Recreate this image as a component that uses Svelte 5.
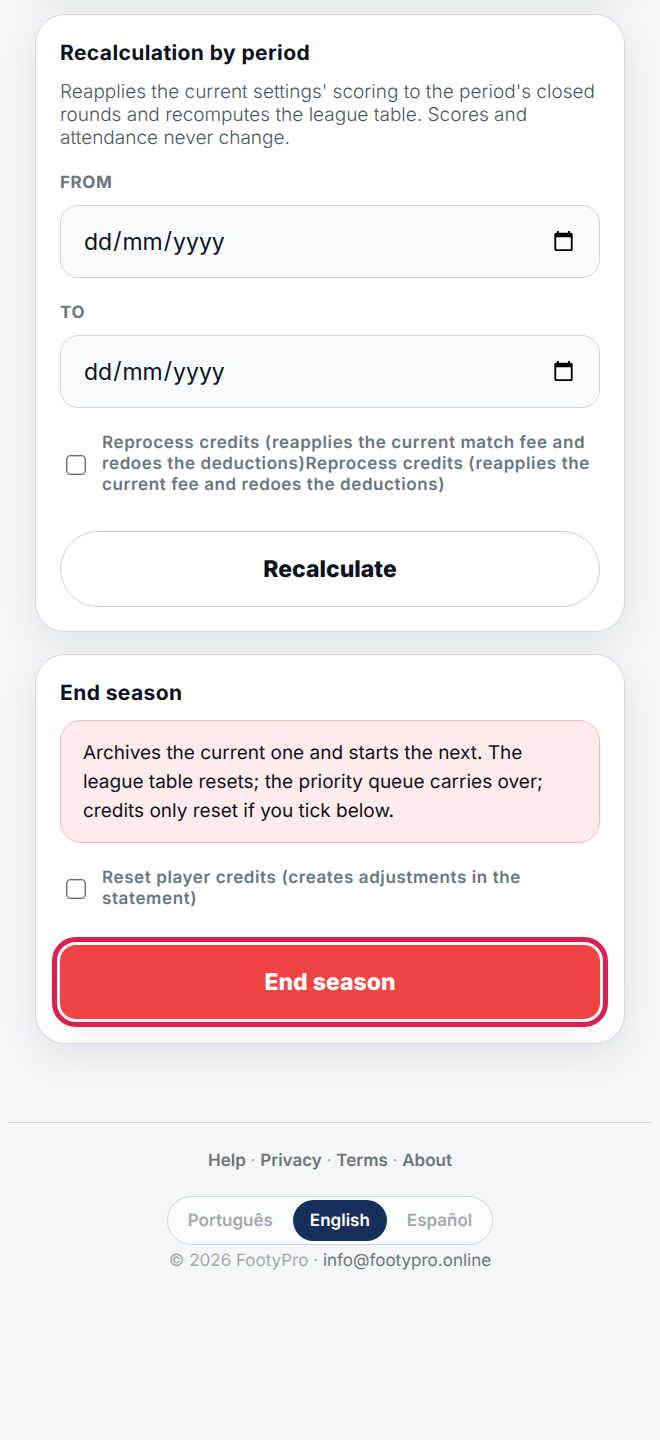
<script lang="ts">
	let from = $state('');
	let to = $state('');
	let reprocess = $state(false);
	let resetCredits = $state(false);
	let lang = $state('en');

	const languages = [
		{ code: 'pt', label: 'Português' },
		{ code: 'en', label: 'English' },
		{ code: 'es', label: 'Español' },
	];

	const links = ['Help', 'Privacy', 'Terms', 'About'];
</script>

<div class="page">
	<main class="cards">
		<section class="card">
			<h2>Recalculation by period</h2>
			<p class="hint">
				Reapplies the current settings' scoring to the period's closed rounds and recomputes the
				league table. Scores and attendance never change.
			</p>

			<label class="field-label" for="from">From</label>
			<input class="date" id="from" type="date" bind:value={from} />

			<label class="field-label" for="to">To</label>
			<input class="date" id="to" type="date" bind:value={to} />

			<label class="check">
				<input type="checkbox" bind:checked={reprocess} />
				<span>Reprocess credits (reapplies the current match fee and redoes the deductions)Reprocess credits (reapplies the current fee and redoes the deductions)</span>
			</label>

			<button class="btn outline" type="button">Recalculate</button>
		</section>

		<section class="card">
			<h2>End season</h2>
			<p class="notice">
				Archives the current one and starts the next. The league table resets; the priority queue
				carries over; credits only reset if you tick below.
			</p>

			<label class="check">
				<input type="checkbox" bind:checked={resetCredits} />
				<span>Reset player credits (creates adjustments in the statement)</span>
			</label>

			<button class="btn danger" type="button">End season</button>
		</section>
	</main>

	<footer>
		<nav>
			{#each links as link, i (link)}
				{#if i > 0}{' · '}{/if}<a href="#{link.toLowerCase()}">{link}</a>
			{/each}
		</nav>
		<div class="langs">
			{#each languages as l (l.code)}
				<button type="button" class:active={lang === l.code} onclick={() => (lang = l.code)}>{l.label}</button>
			{/each}
		</div>
		<div class="copy">© 2026 FootyPro · <a href="mailto:info@footypro.online">info@footypro.online</a></div>
	</footer>
</div>

<style>
:global(body) { background: #f4f6fa; }

.page {
	box-sizing: border-box; min-height: 100vh; padding: 0 8px 160px;
	overflow: hidden;
	font-family: Inter, "Liberation Sans", sans-serif;
	text-rendering: geometricPrecision;
	color: #0b1220;
}

.cards {
	display: flex; flex-direction: column; gap: 22px;
	padding: 0 27px;
}
/* tail of the card scrolled off above */
.cards::before {
	content: ''; height: 60px; margin-top: -68px;
	border-radius: 30px;
}
.card, .cards::before {
	box-shadow: 0 12px 36px rgba(15, 23, 32, .08);
}
.card {
	display: flex; flex-direction: column;
	padding: 25px 24px 24px;
	background: #fff; border: 1px solid #d5d8dc; border-radius: 30px;
}

h2 {
	margin: 0 0 12px;
	font-size: 21px; line-height: 28px; font-weight: 700; letter-spacing: .4px;
}
.hint {
	margin: 0 0 24px;
	font-size: 19px; line-height: 23px; font-weight: 300; color: #4c565e;
}

.field-label {
	margin-bottom: 11px;
	font-size: 17px; line-height: 21px; font-weight: 700;
	letter-spacing: .6px; text-transform: uppercase; color: #6b757d;
}
.date {
	box-sizing: border-box; width: 100%; height: 73px;
	margin: 0 0 25px; padding: 0 22px;
	background: #f8fafc; border: 1px solid #d0d5d9; border-radius: 18px;
	font-family: inherit; font-size: 23px; color: #0b1220;
}
/* day / month / year whatever the browser locale is */
.date::-webkit-datetime-edit-fields-wrapper {
	display: inline-grid; grid-auto-columns: max-content; grid-auto-flow: column;
}
.date::-webkit-datetime-edit-day-field { grid-area: 1 / 1; }
.date::-webkit-datetime-edit-month-field { grid-area: 1 / 3; }
.date::-webkit-datetime-edit-year-field { grid-area: 1 / 5; }
.date::-webkit-datetime-edit-text { grid-row: 1; }

.check {
	display: flex; align-items: center; gap: 16px;
	margin-bottom: 35px; padding-left: 6px;
	font-size: 17px; line-height: 21px; font-weight: 600;
	letter-spacing: .6px; color: #6b757d;
}
.check input {
	appearance: none; box-sizing: border-box; flex-shrink: 0;
	width: 20px; height: 20px; margin: 0;
	background: #fff; border: 1px solid #6a6a6a; border-radius: 4px;
	box-shadow: inset 0 0 0 1px #c4c4c4;
}
.check input:checked { background: #172f5b; border-color: #172f5b; }

.btn {
	height: 76px; padding: 0 24px;
	font-family: inherit; font-size: 23px; font-weight: 800;
	text-rendering: inherit;
	cursor: pointer;
}
.outline {
	background: #fff; color: #0b1220;
	border: 1px solid #c9cdd1; border-radius: 38px;
}
.danger {
	height: 74px;
	background: #f04444; color: #fff;
	border: none; border-radius: 16px;
	outline: 5px solid #dc1f4e; outline-offset: 3px;
	box-shadow: 0 12px 36px rgba(15, 23, 32, .08);
}

.notice {
	margin: 0 0 25px; padding: 17px 22px;
	background: #feebeb; border: 1px solid #f6b9bb; border-radius: 21px;
	font-size: 19px; line-height: 29px;
}

footer {
	display: flex; flex-direction: column; align-items: center;
	margin-top: 78px; padding-top: 26px;
	border-top: 1px solid #cfd3d9;
	font-size: 17px; line-height: 24px; color: #a3a9b3;
}
footer a { color: #6b757d; text-decoration: none; }
nav a { font-weight: 600; }

.langs {
	display: flex; gap: 3px;
	margin: 23px 0 4px; padding: 3px;
	background: #fafcfe; border: 1px solid #d0d5d9; border-radius: 25px;
}
.langs button {
	height: 41px; padding: 0 17px;
	background: none; border: none; border-radius: 21px;
	font-family: inherit; font-size: 17px; font-weight: 600; color: #a3a9b3;
	text-rendering: inherit;
	cursor: pointer;
}
.langs .active { background: #172f5b; color: #fff; }
</style>
